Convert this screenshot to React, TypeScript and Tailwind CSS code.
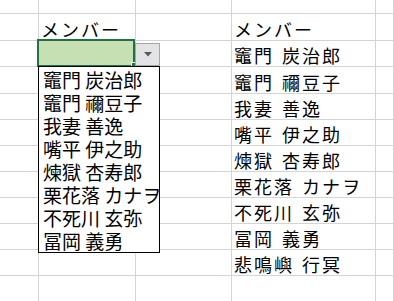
const names = [
  "竈門 炭治郎",
  "竈門 禰豆子",
  "我妻 善逸",
  "嘴平 伊之助",
  "煉獄 杏寿郎",
  "栗花落 カナヲ",
  "不死川 玄弥",
  "冨岡 義勇",
  "悲鳴嶼 行冥",
];
const listNames = names.slice(0, 8);

export default function App() {
  const cells: React.ReactNode[] = [];
  for (let r = 0; r < 12; r++) {
    for (let c = 0; c < 5; c++) {
      let content: string | null = null;
      if (r === 1 && (c === 1 || c === 3)) content = "メンバー";
      if (c === 3 && r >= 2 && r <= 10) content = names[r - 2];
      cells.push(
        <div
          key={`${r}-${c}`}
          className="flex items-end overflow-visible whitespace-nowrap border-r border-b border-[#d4d4d4] pb-[2px] pl-[2px] text-[18px] leading-[18px] tracking-[2px] text-black [word-spacing:2px]"
        >
          {content}
        </div>
      );
    }
  }

  return (
    <div className="relative h-[301px] w-[394px] overflow-hidden bg-white font-['Noto_Sans_CJK_JP',sans-serif]">
      <div className="grid grid-cols-[39px_97px_96px_144px_1fr] grid-rows-[14px_27px_26px_27px_repeat(8,26px)]">
        {cells}
      </div>

      {/* selected cell */}
      <div className="absolute left-[37px] top-[39px] h-[28px] w-[98px] border-2 border-[#217346] bg-[#c6e0b4]" />
      <div className="absolute left-[131px] top-[62px] h-[5px] w-[5px] border-l border-t border-white bg-[#217346]" />

      {/* dropdown button */}
      <div className="absolute left-[135px] top-[43px] flex h-[23px] w-[25px] items-center justify-center border border-[#a6a6a6] bg-[#e3e3e6]">
        <svg width="8" height="5" viewBox="0 0 8 5">
          <polygon points="0,0 8,0 4,4.5" fill="#5a5a5a" />
        </svg>
      </div>

      {/* dropdown list */}
      <div className="absolute left-[38px] top-[66px] flex h-[187px] w-[122px] flex-col border border-black bg-white pt-[1px]">
        {listNames.map((n) => (
          <div
            key={n}
            className="h-[23px] whitespace-nowrap pl-[4px] text-[19px] leading-[23px] text-black"
          >
            {n}
          </div>
        ))}
      </div>
    </div>
  );
}
